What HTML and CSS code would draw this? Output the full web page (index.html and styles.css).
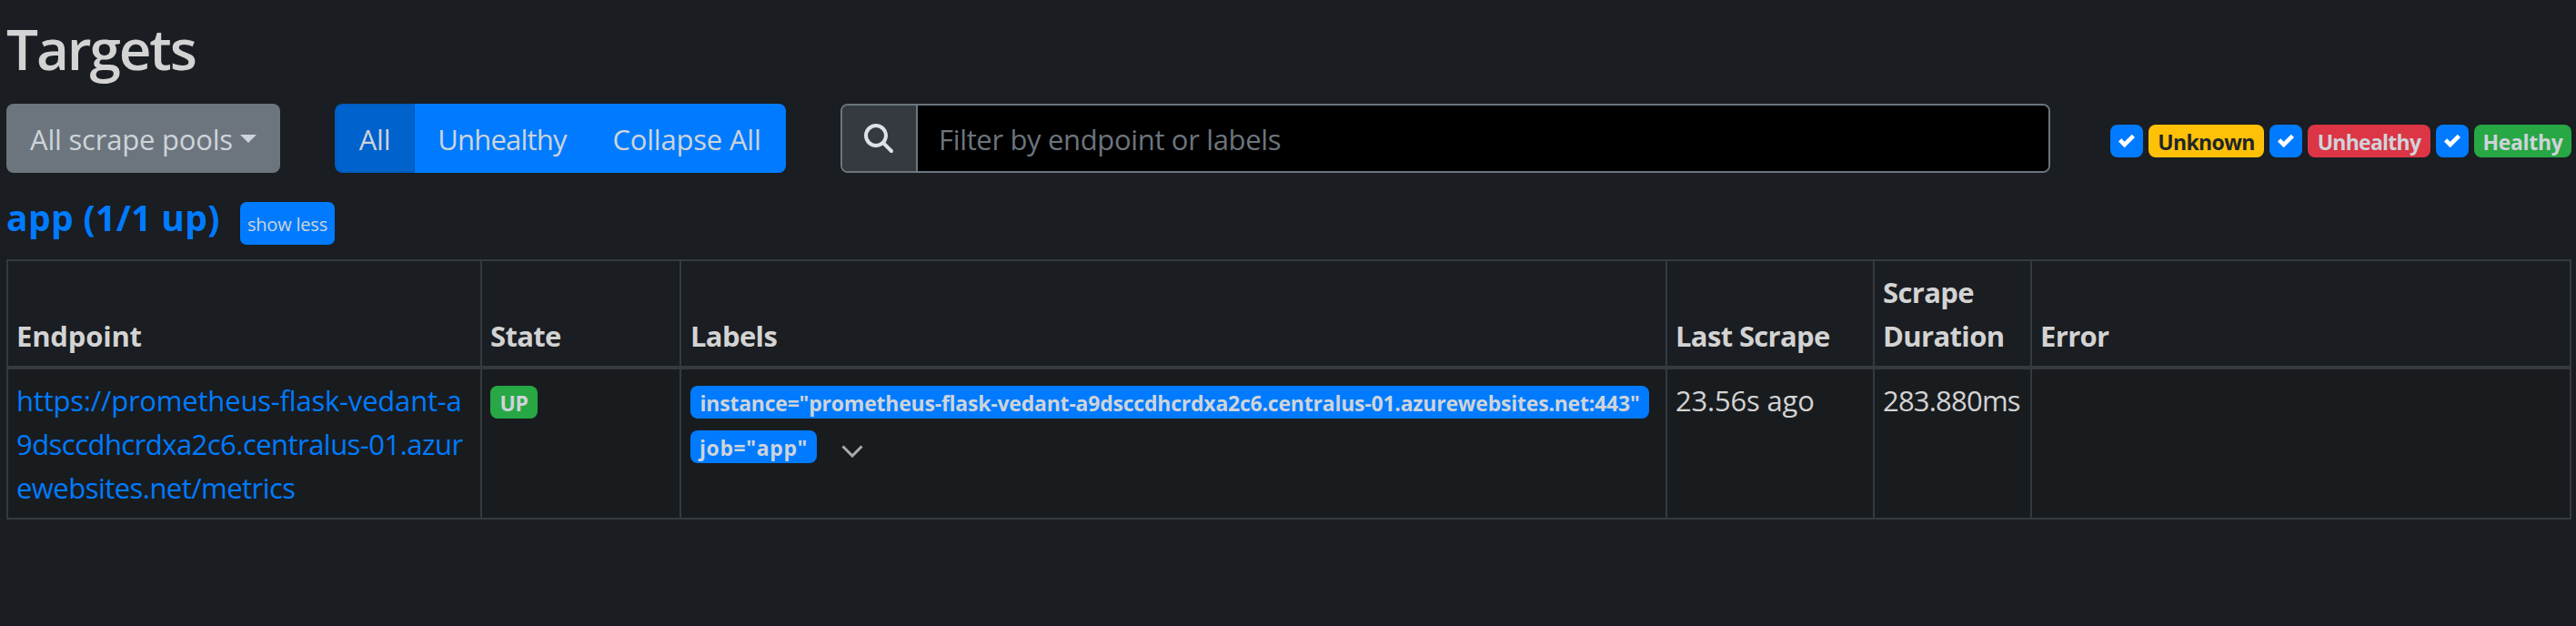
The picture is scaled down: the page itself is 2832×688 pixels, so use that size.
FILE: index.html
```html
<!DOCTYPE html>
<html lang="en">
<head>
<meta charset="utf-8">
<title>Targets</title>
<link rel="stylesheet" href="styles.css">
</head>
<body>
<main class="page">
  <h2 class="title">Targets</h2>
  <div class="toolbar">
    <button class="btn pools">All scrape pools<span class="caret"></span></button>
    <div class="group">
      <button class="btn active">All</button>
      <button class="btn unhealthy-btn">Unhealthy</button>
      <button class="btn collapse-btn">Collapse All</button>
    </div>
    <div class="search">
      <span class="addon"><svg class="search-icon" viewBox="0 0 512 512"><path fill="currentColor" d="M416 208c0 45.900-14.900 88.300-40 122.700L502.600 457.400c12.500 12.500 12.500 32.800 0 45.300s-32.800 12.500-45.300 0L330.700 376c-34.400 25.200-76.800 40-122.700 40C93.100 416 0 322.900 0 208S93.100 0 208 0S416 93.100 416 208zM208 352a144 144 0 1 0 0-288 144 144 0 1 0 0 288z"/></svg></span>
      <input class="filter" type="text" placeholder="Filter by endpoint or labels">
    </div>
    <div class="states">
      <span class="check"><svg viewBox="0 0 8 8"><path fill="#fff" d="M6.564.75l-3.590 3.612-1.538-1.550L0 4.260l2.974 2.990L8 2.193z"/></svg></span>
      <span class="badge warning">Unknown</span>
      <span class="check"><svg viewBox="0 0 8 8"><path fill="#fff" d="M6.564.75l-3.590 3.612-1.538-1.550L0 4.260l2.974 2.990L8 2.193z"/></svg></span>
      <span class="badge danger">Unhealthy</span>
      <span class="check"><svg viewBox="0 0 8 8"><path fill="#fff" d="M6.564.75l-3.590 3.612-1.538-1.550L0 4.260l2.974 2.990L8 2.193z"/></svg></span>
      <span class="badge success">Healthy</span>
    </div>
  </div>
  <div class="pool-head">
    <h3 class="pool-name">app (1/1 up)</h3>
    <button class="show-less">show less</button>
  </div>
  <table class="targets">
    <colgroup><col class="c-endpoint"><col class="c-state"><col class="c-labels"><col class="c-last"><col class="c-duration"><col class="c-error"></colgroup>
    <thead>
      <tr><th class="th-endpoint">Endpoint</th><th>State</th><th class="labels">Labels</th><th>Last Scrape</th><th>Scrape<br>Duration</th><th>Error</th></tr>
    </thead>
    <tbody>
      <tr>
        <td><a class="link">https://prometheus-flask-vedant-a<br><span class="tight">9dsccdhcrdxa2c6.centralus-01.azur<br>ewebsites.net/metrics</span></a></td>
        <td><div class="label-row"><span class="badge success up">UP</span></div></td>
        <td class="labels">
          <div class="label-row"><span class="badge primary instance">instance="prometheus-flask-vedant-a9dsccdhcrdxa2c6.centralus-01.azurewebsites.net:443"</span></div>
          <div class="label-row"><span class="badge primary job">job="app"</span><svg class="chevron" viewBox="0 0 24 14"><path d="M1.500 1.500L12 12L22.500 1.500" fill="none" stroke="#aaabac" stroke-width="3"/></svg></div>
        </td>
        <td>23.56s ago</td>
        <td class="duration">283.880ms</td>
        <td></td>
      </tr>
    </tbody>
  </table>
</main>
</body>
</html>
```
FILE: styles.css
```css
* { box-sizing: border-box; }
body {
  margin: 0;
  background: #1a1d21;
  color: #d3d3d3;
  font: 31px/48px "Open Sans", "Noto Sans", sans-serif;
  letter-spacing: -0.2px;
}
button, input { font: inherit; letter-spacing: inherit; margin: 0; }
.page { padding: 16px 5px 0 7px; }
.title {
  margin: 0 0 23px;
  font-size: 62px;
  line-height: 75px;
  font-weight: 600;
  letter-spacing: -2.1px;
}
.toolbar { display: flex; height: 76px; }
.btn {
  height: 76px;
  border: 0;
  padding: 2px 0 0;
  color: #ced4da;
  background: #007bff;
  white-space: nowrap;
}
.pools {
  width: 301px;
  margin-right: 60px;
  border-radius: 8px;
  background: #6c757d;
}
.caret {
  display: inline-block;
  margin-left: 8px;
  vertical-align: 8px;
  border: 9px solid transparent;
  border-top-color: #ced4da;
  border-bottom: 0;
}
.group {
  display: flex;
  width: 496px;
  margin-right: 60px;
  border-radius: 8px;
  overflow: hidden;
}
.active {
  width: 88px;
  padding: 2px 0 0;
  background: #0062cc;
  border: 2px solid #005cbf;
  border-radius: 8px 0 0 8px;
}
.unhealthy-btn { width: 192px; letter-spacing: -0.8px; }
.collapse-btn { width: 216px; padding-right: 2px; }
.search {
  display: flex;
  width: 1330px;
  border: 2px solid #6c757d;
  border-radius: 8px;
  overflow: hidden;
}
.addon {
  display: flex;
  align-items: center;
  width: 83px;
  padding-left: 24px;
  color: #dee2e6;
  background: #343a40;
  border-right: 2px solid #6c757d;
}
.search-icon { width: 32px; height: 32px; }
.filter {
  flex: 1;
  padding: 2px 0 0 23px;
  border: 0;
  background: #000;
  color: #ced4da;
  letter-spacing: -0.34px;
}
.filter::placeholder { color: #6c757d; opacity: 1; }
.states {
  display: flex;
  gap: 6px;
  margin: 23px 0 0 auto;
}
.check {
  display: flex;
  align-items: center;
  justify-content: center;
  width: 36px;
  height: 36px;
  border-radius: 8px;
  background: #007bff;
}
.check svg { width: 18px; height: 18px; }
.badge {
  display: block;
  height: 36px;
  border-radius: 8px;
  font-size: 23px;
  line-height: 38px;
  font-weight: 700;
  text-align: center;
  white-space: nowrap;
  color: #ced4da;
  letter-spacing: -0.3px;
}
.warning { width: 127px; background: #ffc107; color: #212529; letter-spacing: -0.6px; }
.danger { width: 135px; background: #dc3545; letter-spacing: -0.75px; }
.success { width: 107px; background: #28a745; }
.primary { background: #007bff; }
.up { width: 52px; }
.instance { width: 1054px; letter-spacing: -0.22px; }
.job { width: 139px; letter-spacing: 0.6px; }
.pool-head { display: flex; margin-top: 26px; height: 69px; }
.pool-name {
  width: 257px;
  margin: 0;
  font-size: 39px;
  line-height: 46px;
  font-weight: 700;
  letter-spacing: 0.35px;
  color: #007bff;
  white-space: nowrap;
}
.show-less {
  width: 104px;
  height: 47px;
  margin-top: 6px;
  padding: 2px 0 0;
  border: 0;
  border-radius: 7px;
  background: #007bff;
  color: #ced4da;
  font-size: 20px;
  line-height: 30px;
}
.targets {
  width: 2820px;
  table-layout: fixed;
  border-collapse: collapse;
}
.c-endpoint { width: 521px; }
.c-state { width: 219px; }
.c-labels { width: 1084px; }
.c-last { width: 228px; }
.c-duration { width: 173px; }
.c-error { width: 593px; }
.targets th, .targets td {
  border: 2px solid #343a40;
  padding: 10px 0 9px 9px;
  text-align: left;
  white-space: nowrap;
}
.targets th { vertical-align: bottom; border-bottom-width: 4px; letter-spacing: -0.65px; }
.targets .th-endpoint { letter-spacing: -0.2px; }
.targets td { vertical-align: top; background: #191c1f; }
.targets .labels { padding-left: 10px; }
.targets .duration { letter-spacing: -0.8px; }
.link { color: #007bff; }
.tight { letter-spacing: -0.54px; }
.label-row { display: flex; height: 49px; padding-top: 8px; }
.chevron { width: 24px; height: 14px; margin: 16px 0 0 27px; }
```
